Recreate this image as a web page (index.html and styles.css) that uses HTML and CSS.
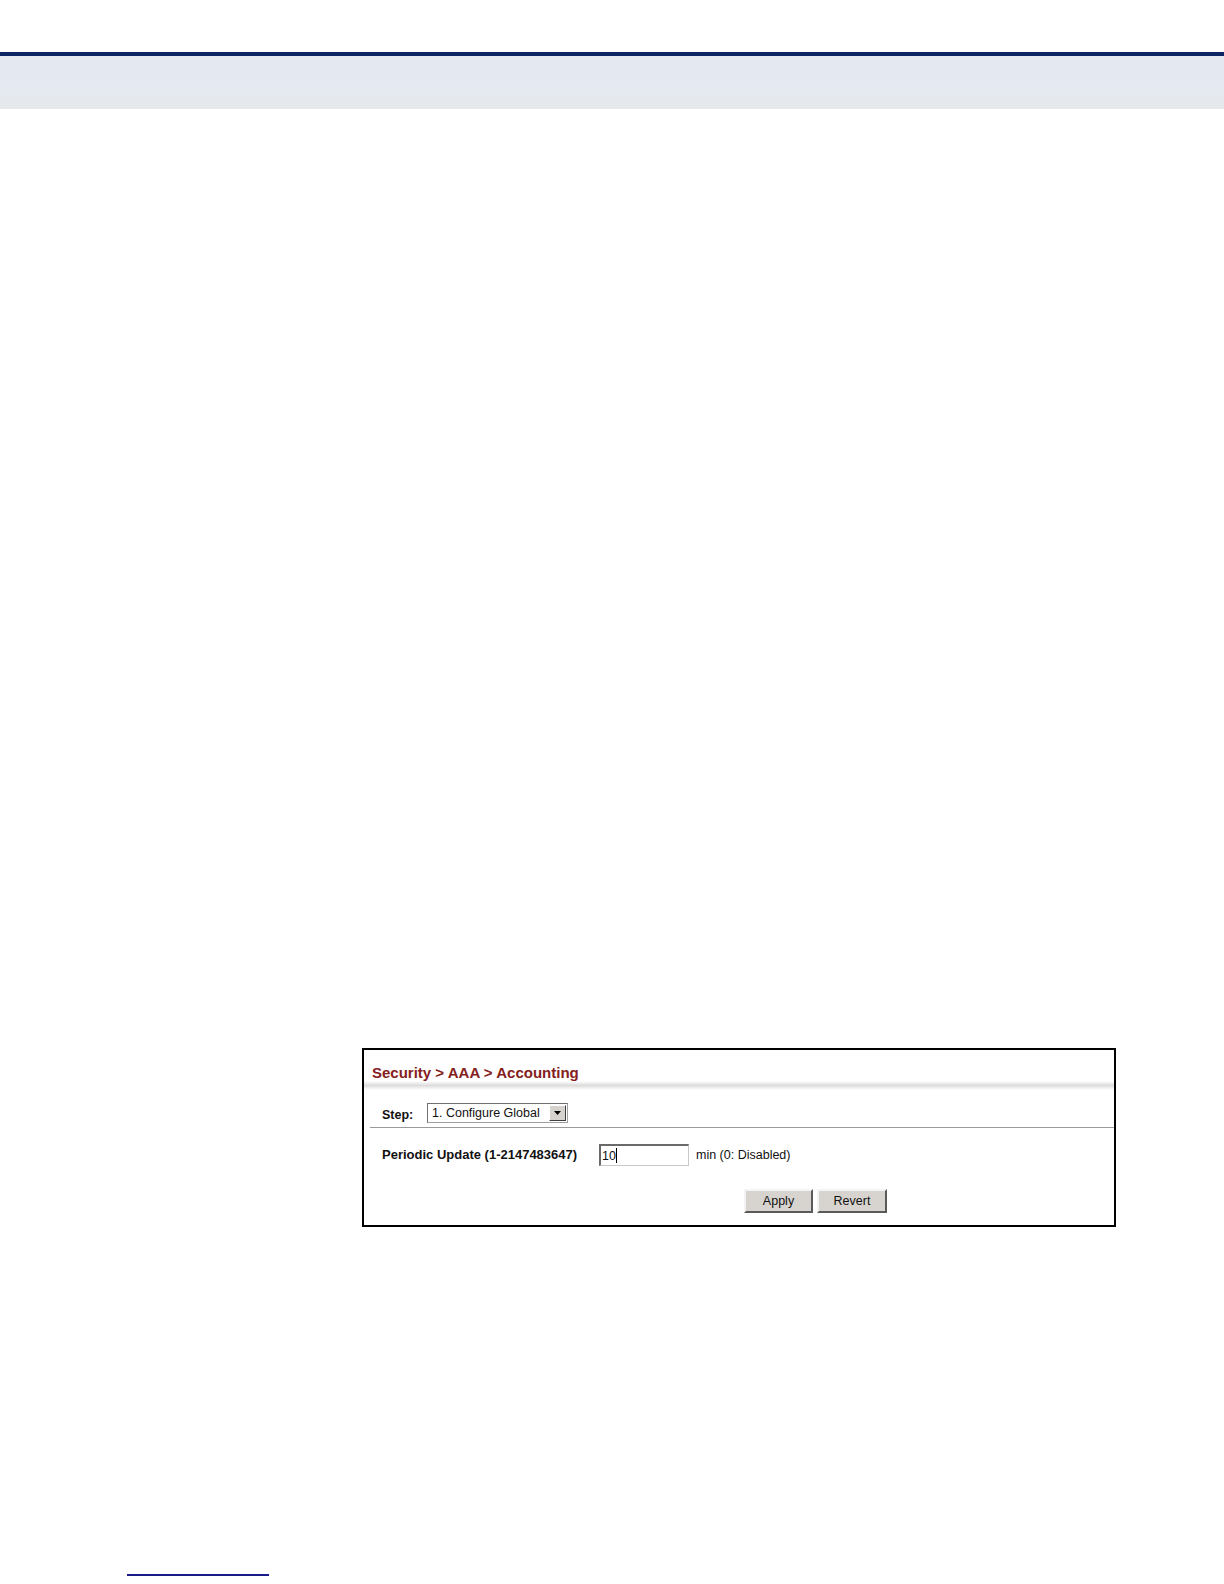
FILE: index.html
```html
<!DOCTYPE html>
<html lang="en">
<head>
<meta charset="utf-8">
<title>Security &gt; AAA &gt; Accounting</title>
<link rel="stylesheet" href="styles.css">
</head>
<body>
<header class="top">
  <div class="top-rule"></div>
  <div class="top-band"></div>
</header>
<main class="content">
  <section class="panel">
    <h1 class="panel-title">Security &gt; AAA &gt; Accounting</h1>
    <div class="title-shade"></div>
    <div class="step-row">
      <span class="step-label">Step:</span>
      <div class="select">
        <span class="select-text">1. Configure Global</span>
        <span class="select-btn"><svg width="9" height="6" viewBox="0 0 9 6"><path d="M1 1h7L4.5 5z" fill="#000"/></svg></span>
      </div>
    </div>
    <div class="separator"></div>
    <div class="field-row">
      <span class="field-label">Periodic Update (1-2147483647)</span>
      <div class="text-input"><span class="value">10</span><span class="caret"></span></div>
      <span class="field-hint">min (0: Disabled)</span>
    </div>
    <div class="button-row">
      <button class="btn btn-apply" type="button">Apply</button>
      <button class="btn btn-revert" type="button">Revert</button>
    </div>
  </section>
</main>
<footer class="foot">
  <div class="foot-line"></div>
</footer>
</body>
</html>
```
FILE: styles.css
```css
html, body {
  margin: 0;
  padding: 0;
  background: #ffffff;
}
body {
  font-family: "Liberation Sans", Arial, sans-serif;
  color: #111;
  width: 1224px;
  height: 1584px;
  overflow: hidden;
}
.top {
  padding-top: 52px;
  width: 1224px;
}
.top-rule {
  height: 4px;
  background: #0c2461;
}
.top-band {
  height: 53px;
  background: linear-gradient(to bottom, #e4e8f1 0%, #e5e9f0 75%, #e6e9eb 100%);
}
.content {
  padding-top: 939px;
  padding-left: 362px;
}
.panel {
  width: 750px;
  border: 2px solid #000;
  background: #fff;
}
.panel-title {
  margin: 0;
  padding: 15px 0 0 8px;
  height: 16px;
  font-size: 15px;
  line-height: 16px;
  font-weight: bold;
  color: #842020;
}
.title-shade {
  height: 9px;
  background: linear-gradient(to bottom, #ffffff 0%, #dcdcdc 50%, #f6f6f6 85%, #ffffff 100%);
}
.step-row {
  display: flex;
  align-items: flex-start;
  padding: 13px 0 4px 18px;
}
.step-label {
  width: 45px;
  padding-top: 5px;
  font-size: 12.5px;
  line-height: 14px;
  font-weight: bold;
}
.select {
  box-sizing: border-box;
  width: 141px;
  height: 20px;
  border: 1px solid #6f6f6f;
  border-right-color: #a0a0a0;
  border-bottom-color: #a0a0a0;
  display: flex;
  align-items: center;
  justify-content: space-between;
  background: #fff;
}
.select-text {
  padding-left: 4px;
  font-size: 12.5px;
  line-height: 14px;
}
.select-btn {
  box-sizing: border-box;
  width: 17px;
  height: 16px;
  margin-right: 1px;
  background: #d6d3ce;
  border: 1px solid #fff;
  border-right-color: #404040;
  border-bottom-color: #404040;
  display: flex;
  align-items: center;
  justify-content: center;
}
.separator {
  height: 1px;
  margin-left: 6px;
  background: #9a9a9a;
}
.field-row {
  display: flex;
  align-items: center;
  padding: 16px 0 0 18px;
}
.field-label {
  width: 217px;
  font-size: 13px;
  line-height: 16px;
  font-weight: bold;
}
.text-input {
  box-sizing: border-box;
  width: 90px;
  height: 22px;
  border: 1px solid #c8c8c8;
  border-top: 2px solid #6a6a6a;
  border-left: 2px solid #6a6a6a;
  display: flex;
  align-items: center;
  padding-left: 1px;
  background: #fff;
}
.value {
  font-size: 12.5px;
  line-height: 14px;
}
.caret {
  width: 1px;
  height: 15px;
  background: #000;
}
.field-hint {
  margin-left: 7px;
  font-size: 12.5px;
  line-height: 14px;
}
.button-row {
  display: flex;
  gap: 4px;
  padding: 23px 0 12px 380px;
}
.btn {
  box-sizing: border-box;
  height: 24px;
  padding: 0;
  margin: 0;
  font-family: "Liberation Sans", Arial, sans-serif;
  font-size: 12.5px;
  color: #111;
  background: #d7d4cf;
  border: 2px solid #f4f4f4;
  border-right-color: #5a5a5a;
  border-bottom-color: #5a5a5a;
}
.btn-apply {
  width: 69px;
}
.btn-revert {
  width: 70px;
}
.foot {
  padding-top: 347px;
  padding-left: 127px;
}
.foot-line {
  width: 142px;
  height: 2px;
  background: #1a1a8a;
}
```
